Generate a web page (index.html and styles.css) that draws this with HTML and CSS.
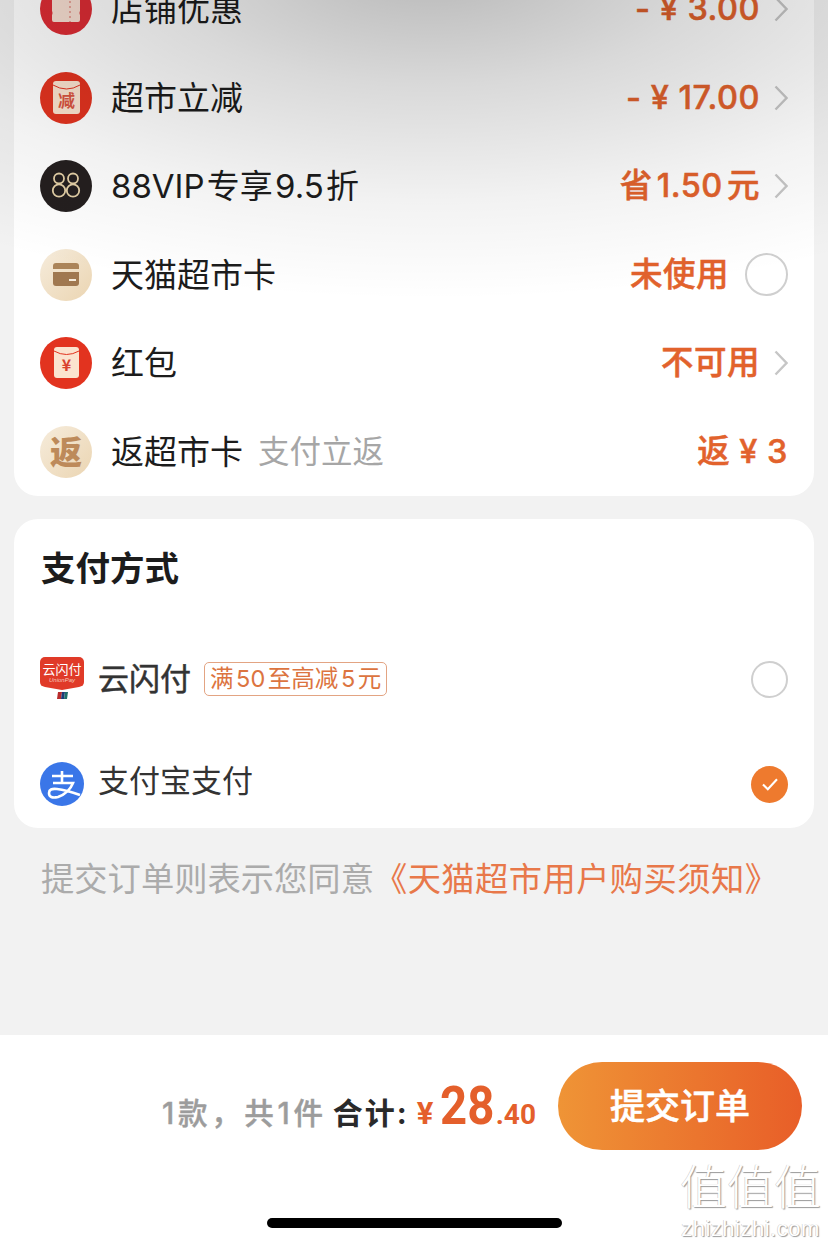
FILE: index.html
```html
<!DOCTYPE html>
<html lang="zh">
    <head>
        <meta charset="utf-8" />
        <title>确认订单</title>
        <link rel="stylesheet" href="styles.css">
    </head>
    <body>
        <div class="page">
            <section class="card discounts">
                <div class="row">
                    <svg class="icon" viewBox="0 0 52 52">
                        <circle cx="26" cy="26" r="26" fill="#dd2c34"/>
                        <path d="M12 8h28v20a4.5 4.5 0 0 0 0 4v5a2 2 0 0 1-2 2H14a2 2 0 0 1-2-2v-5a4.5 4.5 0 0 0 0-4z" fill="#f8dfd2"/>
                        <path d="M30 8v31" fill="none" stroke="#e08a80" stroke-width="1.4" stroke-dasharray="2 3"/>
                    </svg>
                    <span class="name">店铺优惠</span>
                    <span class="value wide">- ¥ 3.00</span>
                    <svg class="chevron" viewBox="0 0 14 26"><path d="M1.5 1.5 12.5 13 1.5 24.5"/></svg>
                </div>
                <div class="row">
                    <svg class="icon" viewBox="0 0 52 52">
                        <circle cx="26" cy="26" r="26" fill="#e2331f"/>
                        <rect x="13" y="9" width="27" height="33" rx="3" fill="#fbe3cf"/>
                        <path d="M13 13q13.500 8 27 0" fill="none" stroke="#e2331f" stroke-width="1"/>
                        <text x="26.500" y="35" class="icon-char red-char">减</text>
                    </svg>
                    <span class="name">超市立减</span>
                    <span class="value wide">- ¥ 17.00</span>
                    <svg class="chevron" viewBox="0 0 14 26"><path d="M1.5 1.5 12.5 13 1.5 24.5"/></svg>
                </div>
                <div class="row">
                    <svg class="icon" viewBox="0 0 52 52">
                        <circle cx="26" cy="26" r="26" fill="#241f1f"/>
                        <g fill="none" stroke="#e3cfa6" stroke-width="1.800">
                            <circle cx="19" cy="18.500" r="5"/>
                            <circle cx="19" cy="30.500" r="6.200"/>
                            <circle cx="33" cy="18.500" r="5"/>
                            <circle cx="33" cy="30.500" r="6.200"/>
                        </g>
                    </svg>
                    <span class="name">88VIP 专享 9.5 折</span>
                    <span class="value saved">省 1.50 元</span>
                    <svg class="chevron" viewBox="0 0 14 26"><path d="M1.5 1.5 12.5 13 1.5 24.5"/></svg>
                </div>
                <div class="row">
                    <svg class="icon" viewBox="0 0 52 52">
                        <defs>
                            <linearGradient id="cream" x1="0" y1="0" x2="1" y2="1">
                                <stop offset="0" stop-color="#f6ecdc"/>
                                <stop offset="1" stop-color="#ebd5b2"/>
                            </linearGradient>
                        </defs>
                        <circle cx="26" cy="26" r="26" fill="url(#cream)"/>
                        <path d="M13 20v-3a3 3 0 0 1 3-3h20a3 3 0 0 1 3 3v3z" fill="#ab8459"/>
                        <path d="M13 23h26v11a3 3 0 0 1-3 3H16a3 3 0 0 1-3-3z" fill="#a07850"/>
                        <rect x="29" y="30" width="7" height="2" fill="#f6ecdc"/>
                    </svg>
                    <span class="name">天猫超市卡</span>
                    <span class="value">未使用</span>
                    <span class="radio"></span>
                </div>
                <div class="row">
                    <svg class="icon" viewBox="0 0 52 52">
                        <circle cx="26" cy="26" r="26" fill="#e2331f"/>
                        <rect x="14" y="10" width="25" height="31" rx="3" fill="#fbe3cf"/>
                        <path d="M14 14q12.500 7 25 0" fill="none" stroke="#e2331f" stroke-width="1"/>
                        <text x="26.500" y="34" class="icon-char yen-char">¥</text>
                    </svg>
                    <span class="name">红包</span>
                    <span class="value">不可用</span>
                    <svg class="chevron" viewBox="0 0 14 26"><path d="M1.5 1.5 12.5 13 1.5 24.5"/></svg>
                </div>
                <div class="row">
                    <svg class="icon" viewBox="0 0 52 52">
                        <circle cx="26" cy="26" r="26" fill="url(#cream)"/>
                        <text x="26" y="38" class="icon-char back-char">返</text>
                    </svg>
                    <span class="name">返超市卡</span>
                    <span class="hint">支付立返</span>
                    <span class="value wide">返 ¥ 3</span>
                </div>
            </section>

            <section class="card pay">
                <h2>支付方式</h2>
                <div class="pay-row unionpay">
                    <svg class="pay-icon" viewBox="0 0 44 44">
                        <path d="M5 0h34a5 5 0 0 1 5 5v20q0 4-5 5l-17 3-17-3q-5-1-5-5V5a5 5 0 0 1 5-5z" fill="#e03a28"/>
                        <text x="22" y="17" class="up-name">云闪付</text>
                        <text x="22" y="25" class="up-sub">UnionPay</text>
                        <path d="M18 35h4l-1 7h-4z" fill="#b82c2c"/>
                        <path d="M22 35h3l-1 7h-3z" fill="#1d3c78"/>
                        <path d="M25 35h3l-1 7h-3z" fill="#1f6f6b"/>
                    </svg>
                    <span class="pay-name strong">云闪付</span>
                    <span class="tag">满 50 至高减 5 元</span>
                    <span class="radio small"></span>
                </div>
                <div class="pay-row alipay">
                    <svg class="pay-icon" viewBox="0 0 44 44">
                        <circle cx="22" cy="22" r="22" fill="#3a76e8"/>
                        <path d="M12 14H33M22 9V21M13 21H33Q29 31 18 35 9 37 9 31 9 26 17 27 26 28 40 33" fill="none" stroke="#fff" stroke-width="2.600"/>
                    </svg>
                    <span class="pay-name">支付宝支付</span>
                    <span class="radio small checked">
                        <svg viewBox="0 0 20 16"><path d="M2 8.500 7.500 14 18 2.500"/></svg>
                    </span>
                </div>
            </section>

            <p class="agree">提交订单则表示您同意<span class="link">《天猫超市用户购买须知》</span></p>

            <footer class="bottom">
                <div class="submit-bar">
                    <div class="sum">
                        <span class="count">1款，共1件</span>
                        <span class="total-label">合计:</span>
                        <span class="yen">¥</span>
                        <span class="int">28</span>
                        <span class="dec">.40</span>
                    </div>
                    <button class="submit">提交订单</button>
                </div>
                <div class="home-bar"></div>
            </footer>

            <div class="shade"></div>
            <div class="watermark">
                <div class="wm-big">值值值</div>
                <div class="wm-small">zhizhizhi.com</div>
            </div>
        </div>
    </body>
</html>
```

FILE: styles.css
```css
html,
body {
    margin: 0;
    background-color: #f2f2f2;
}
body {
    font-family: "Inter", "Noto Sans CJK SC", sans-serif;
    color: #1c1c1c;
}
.page {
    position: relative;
    width: 828px;
    height: 1242px;
    overflow: hidden;
    display: flex;
    flex-direction: column;
}
.card {
    flex: none;
    margin: 0 14px;
    background-color: #ffffff;
    border-radius: 24px;
}
.discounts {
    margin-top: -35px;
    display: flex;
    flex-direction: column;
}
.row {
    height: 88.5px;
    padding: 0 26px;
    display: flex;
    align-items: center;
}
.icon {
    flex: none;
    width: 52px;
    height: 52px;
    margin-right: 19px;
}
.icon-char {
    font-family: "Noto Sans CJK SC", sans-serif;
    text-anchor: middle;
}
.red-char {
    font-size: 17px;
    font-weight: 700;
    fill: #d9543f;
}
.yen-char {
    font-size: 16px;
    font-weight: 700;
    fill: #d9412f;
}
.back-char {
    font-size: 32px;
    font-weight: 900;
    fill: #bd8a5a;
}
.name {
    font-size: 33px;
    line-height: 40px;
    word-spacing: -7px;
}
.hint {
    margin-left: 15px;
    font-size: 31.5px;
    line-height: 40px;
    color: #a6a6a6;
}
.value {
    margin-left: auto;
    font-size: 32.5px;
    line-height: 40px;
    font-weight: 500;
    color: #e2622c;
    -webkit-text-stroke: 0.5px #e2622c;
    letter-spacing: 0.5px;
}
.value.wide {
    word-spacing: 0;
}
.value.saved {
    word-spacing: -5px;
}
.chevron {
    flex: none;
    width: 14px;
    height: 26px;
    margin-left: 14px;
    fill: none;
    stroke: #c6c6c6;
    stroke-width: 2.4;
}
.radio {
    flex: none;
    box-sizing: border-box;
    width: 43px;
    height: 43px;
    margin-left: 16px;
    border: 2.5px solid #cfcfcf;
    border-radius: 50%;
}
.radio.small {
    width: 37px;
    height: 37px;
    margin-left: auto;
    border-width: 2px;
}
.radio.checked {
    border: none;
    background-color: #ee7a2e;
    display: flex;
    align-items: center;
    justify-content: center;
    margin-top: 6px;
}
.radio.checked svg {
    width: 18px;
    height: 14px;
    fill: none;
    stroke: #ffffff;
    stroke-width: 2.4;
}
.pay {
    margin-top: 23px;
    height: 309px;
    padding: 0 26px;
    box-sizing: border-box;
}
.pay h2 {
    margin: 0;
    padding: 27px 0 0 1px;
    font-size: 34.5px;
    line-height: 46px;
    font-weight: 700;
    height: 62px;
}
.pay-row {
    display: flex;
    align-items: center;
    height: 102px;
}
.unionpay {
    margin-top: 20px;
}
.pay-icon {
    flex: none;
    width: 44px;
    height: 44px;
    margin-right: 14px;
}
.alipay .pay-icon {
    margin-top: 6px;
}
.up-name {
    font-family: "Noto Sans CJK SC", sans-serif;
    font-size: 13px;
    fill: #ffffff;
    text-anchor: middle;
}
.up-sub {
    font-family: "Liberation Sans", sans-serif;
    font-size: 6px;
    font-style: italic;
    fill: #f7c9bb;
    text-anchor: middle;
}
.pay-name {
    font-size: 31px;
    line-height: 40px;
    color: #333333;
}
.pay-name.strong {
    -webkit-text-stroke: 0.5px #333333;
}
.tag {
    margin-left: 13px;
    padding: 0 5px;
    height: 32px;
    line-height: 31px;
    font-size: 23.5px;
    color: #dc7440;
    border: 1px solid #e3a483;
    border-radius: 5px;
    word-spacing: -4px;
}
.agree {
    margin: 29px 0 0 41px;
    font-size: 33.3px;
    line-height: 44px;
    color: #ababab;
    white-space: nowrap;
}
.link {
    color: #e8784a;
    letter-spacing: 0.4px;
}
.bottom {
    margin-top: auto;
    height: 207px;
    background-color: #ffffff;
    display: flex;
    flex-direction: column;
}
.submit-bar {
    margin-top: 27px;
    padding-right: 26px;
    display: flex;
    align-items: center;
    justify-content: flex-end;
}
.sum {
    display: flex;
    align-items: baseline;
    padding-top: 8px;
    line-height: 60px;
}
.count {
    font-size: 29.5px;
    font-weight: 500;
    color: #9c9c9c;
    letter-spacing: 3.7px;
    -webkit-text-stroke: 0.4px #9c9c9c;
}
.total-label {
    margin-left: 6px;
    font-size: 30px;
    font-weight: 700;
    color: #2a2a2a;
    letter-spacing: 2px;
}
.yen,
.int,
.dec {
    font-family: "Roboto", sans-serif;
    font-weight: 700;
    color: #e45f2b;
    display: inline-block;
    transform-origin: left bottom;
}
.yen {
    margin-left: 8px;
    font-size: 31px;
}
.int {
    margin-left: 7px;
    font-size: 53.5px;
    transform: scaleX(0.885);
    margin-right: -6px;
}
.dec {
    font-size: 28px;
}
.submit {
    margin-left: 22px;
    padding-bottom: 6px;
    width: 244px;
    height: 88px;
    border: none;
    border-radius: 44px;
    background: linear-gradient(90deg, #ef9436, #e85e28);
    color: #ffffff;
    font-family: inherit;
    font-size: 35px;
    font-weight: 500;
    -webkit-text-stroke: 0.5px #ffffff;
}
.home-bar {
    align-self: flex-start;
    margin: 68px 0 0 267px;
    width: 295px;
    height: 10px;
    border-radius: 5px;
    background-color: #000000;
}
.shade {
    position: absolute;
    top: 0;
    left: 0;
    width: 828px;
    height: 340px;
    pointer-events: none;
    background: radial-gradient(ellipse 800px 330px at 52% -30px, rgba(0, 0, 0, 0.28), rgba(0, 0, 0, 0.15) 35%, rgba(0, 0, 0, 0.05) 70%, rgba(0, 0, 0, 0) 100%);
}
.watermark {
    position: absolute;
    right: 7px;
    bottom: 2px;
    color: #ffffff;
    text-align: center;
    text-shadow: 1px 1px 1px #9a9a9a, -0.5px -0.5px 0 #c8c8c8;
}
.wm-big {
    font-family: "Noto Sans CJK SC", sans-serif;
    font-size: 47px;
    line-height: 56px;
    margin-bottom: 6px;
    font-weight: 300;
}
.wm-small {
    font-family: "Liberation Sans", sans-serif;
    font-size: 22px;
    line-height: 22px;
    letter-spacing: 0.5px;
}
```
